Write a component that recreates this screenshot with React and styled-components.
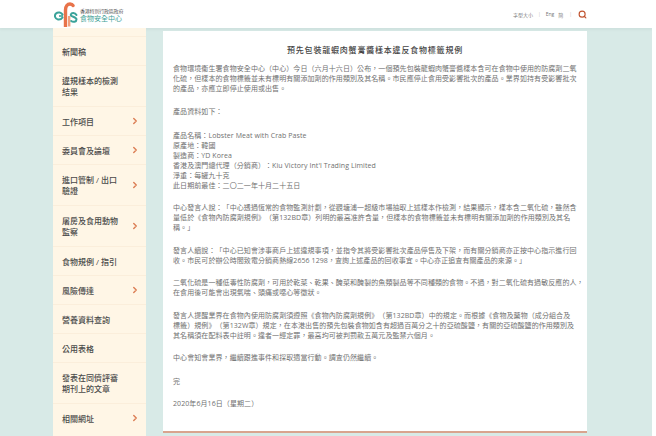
import React from "react";
import styled, { createGlobalStyle } from "styled-components";
import { ChevronRight, Search } from "lucide-react";

const GlobalStyle = createGlobalStyle`
  html, body {
    margin: 0;
    padding: 0;
    height: 436px;
    overflow: hidden;
    background: #fff;
    font-family: "Open Sans", "Noto Sans CJK TC", sans-serif;
  }
`;

const Page = styled.div`
  width: 652px;
  height: 436px;
  overflow: hidden;
  background: #d8eae7;
`;

const Header = styled.header`
  height: 28px;
  background: #fff;
  display: flex;
  align-items: center;
  justify-content: space-between;
  padding: 0 65px 0 54px;
  box-shadow: 0 2px 2px rgba(60, 110, 105, 0.06);
`;

const Brand = styled.div`
  display: flex;
  align-items: center;
  gap: 2px;
`;

const BrandText = styled.div`
  display: flex;
  flex-direction: column;
  gap: 1px;
  padding-top: 3px;
`;

const GovName = styled.span`
  font-size: 5px;
  letter-spacing: -0.2px;
  line-height: 6px;
  color: #555;
  white-space: nowrap;
`;

const CentreName = styled.span`
  font-size: 7px;
  line-height: 8px;
  color: #3f9f97;
  white-space: nowrap;
`;

const Tools = styled.div`
  display: flex;
  align-items: center;
  gap: 4px;
  font-size: 5px;
  color: #777;
`;

const ToolDivider = styled.span`
  color: #c4c4c4;
  margin: 0 ${(p) => p.$space ?? 1}px;
`;

const Columns = styled.div`
  display: flex;
  align-items: flex-start;
  gap: 17px;
  padding-left: 53px;
`;

const Sidebar = styled.nav`
  width: 93px;
  height: 408px;
  padding-top: 8px;
  box-sizing: border-box;
  background: #fff6e6;
  flex-shrink: 0;
`;

const NavRow = styled.div`
  display: flex;
  align-items: center;
  justify-content: space-between;
  height: ${(p) => (p.$tall ? 41 : 29)}px;
  box-sizing: border-box;
  padding: 0 6px 0 9px;
  border-top: 1px solid #fbeedb;
  font-size: 8px;
  line-height: 11px;
  font-weight: 500;
  color: #4a4a4a;
`;

const NavLabel = styled.span`
  width: 60px;
`;

const Arrow = styled(ChevronRight)`
  width: 10px;
  height: 10px;
  color: #dc7f56;
  stroke-width: 3.4;
  flex-shrink: 0;
`;

const Article = styled.main`
  width: 424px;
  height: 402px;
  margin-top: 3px;
  box-sizing: border-box;
  padding: 13px 10px 0;
  background: #fff;
  border-bottom: 2px solid #d9a48e;
  font-size: 7px;
  letter-spacing: 0.08px;
  line-height: 10px;
  color: #707070;
  text-spacing-trim: space-all;
`;

const Title = styled.h1`
  margin: 0 0 9px;
  text-align: center;
  font-size: 8px;
  letter-spacing: 0.8px;
  line-height: 11px;
  font-weight: 500;
  color: #444;
`;

const Para = styled.p`
  margin: 0 0 ${(p) => p.$gap ?? 12.5}px;
`;

const Line = styled.span`
  display: block;
  white-space: ${(p) => (p.$nowrap ? "nowrap" : "normal")};
`;

// the copy is typed with plain marks, the page shows them full width
const fullWidth = (text) =>
  text
    .replace(/,/g, "\uFF0C")
    .replace(/\(/g, "\uFF08")
    .replace(/\)/g, "\uFF09")
    .replace(/:/g, "\uFF1A");

const navItems = [
  { label: "新聞稿" },
  { label: "違規樣本的檢測結果", tall: true },
  { label: "工作項目", arrow: true },
  { label: "委員會及論壇", arrow: true },
  { label: "進口管制 / 出口驗證", tall: true, arrow: true },
  { label: "屠房及食用動物監察", tall: true, arrow: true },
  { label: "食物規例 / 指引" },
  { label: "風險傳達", arrow: true },
  { label: "營養資料查詢" },
  { label: "公用表格" },
  { label: "發表在同儕評審期刊上的文章", tall: true },
  { label: "相關網址", arrow: true },
];

const paragraphs = [
  { lines: ["食物環境衞生署食物安全中心(中心)今日(六月十六日)公布,一個預先包裝龍蝦肉蟹膏醬樣本含可在食物中使用的防腐劑二氧化硫,但樣本的食物標籤並未有標明有關添加劑的作用類別及其名稱。市民應停止食用受影響批次的產品。業界如持有受影響批次的產品,亦應立即停止使用或出售。"] },
  { lines: ["產品資料如下:"], gap: 14 },
  {
    lines: [
      "產品名稱:Lobster Meat with Crab Paste",
      "原產地:韓國",
      "製造商:YD Korea",
      "香港及澳門總代理(分銷商):Kiu Victory Int'l Trading Limited",
      "淨重:每罐九十克",
      "此日期前最佳:二〇二一年十月二十五日",
    ],
  },
  { lines: ["中心發言人說:「中心透過恆常的食物監測計劃,從觀塘浦一超級市場抽取上述樣本作檢測,結果顯示,樣本含二氧化硫,雖然含量低於《食物內防腐劑規例》(第132BD章)列明的最高准許含量,但樣本的食物標籤並未有標明有關添加劑的作用類別及其名稱。」"] },
  { lines: ["發言人續說:「中心已知會涉事商戶上述違規事項,並指令其將受影響批次產品停售及下架,而有關分銷商亦正按中心指示進行回收。市民可於辦公時間致電分銷商熱線2656 1298,查詢上述產品的回收事宜。中心亦正追查有關產品的來源。」"] },
  {
    // the comma hangs past the text edge in the original, so this break is fixed
    nowrap: true,
    lines: [
      "二氧化硫是一種低毒性防腐劑,可用於乾菜、乾果、醃菜和醃製的魚類製品等不同種類的食物。不過,對二氧化硫有過敏反應的人,",
      "在食用後可能會出現氣喘、頭痛或噁心等徵狀。",
    ],
  },
  { lines: ["發言人提醒業界在食物內使用防腐劑須遵照《食物內防腐劑規例》(第132BD章)中的規定。而根據《食物及藥物(成分組合及標籤)規例》(第132W章)規定,在本港出售的預先包裝食物如含有超過百萬分之十的亞硫酸鹽,有關的亞硫酸鹽的作用類別及其名稱須在配料表中註明。違者一經定罪,最高均可被判罰款五萬元及監禁六個月。"] },
  { lines: ["中心會知會業界,繼續跟進事件和採取適當行動。調查仍然繼續。"], gap: 14 },
  { lines: ["完"], gap: 12 },
  { lines: ["2020年6月16日(星期二)"] },
];

const Logo = () => (
  <svg width="24" height="25" viewBox="0 0 24 25" fill="none">
    <path d="M11.5 24.5V8C11.5 4 13.5 2 16 2C17.5 2 18.5 2.6 19 3.6" stroke="#e8734a" strokeWidth="3.4" strokeLinecap="round" />
    <path d="M15.2 24.5V14" stroke="#f0a07e" strokeWidth="2.4" />
    <path d="M8.5 12.5C7.5 10.5 4 9.5 2 11.5C0 13.5 1 17 4 17.5C6 17.8 7.5 17 8.5 15.5" stroke="#3aa39a" strokeWidth="2" strokeLinecap="round" />
    <path d="M5 14H9" stroke="#3aa39a" strokeWidth="1.6" />
    <path d="M22.5 13C21 10.5 17.5 10.5 16.8 12.5C16 15 22.5 14.5 22.5 17.5C22.5 20 19 20.5 17.2 19" stroke="#3aa39a" strokeWidth="2" strokeLinecap="round" />
  </svg>
);

const App = () => (
  <>
    <GlobalStyle />
    <Page>
      <Header>
        <Brand>
          <Logo />
          <BrandText>
            <GovName>香港特別行政區政府</GovName>
            <CentreName>食物安全中心</CentreName>
          </BrandText>
        </Brand>
        <Tools>
          <span>字型大小</span>
          <ToolDivider>|</ToolDivider>
          <span>Eng</span>
          <span>简</span>
          <ToolDivider $space={2}>|</ToolDivider>
          <Search size={9} color="#c0532f" strokeWidth={3} />
        </Tools>
      </Header>
      <Columns>
        <Sidebar>
          {navItems.map((item) => (
            <NavRow key={item.label} $tall={item.tall}>
              <NavLabel>{item.label}</NavLabel>
              {item.arrow && <Arrow />}
            </NavRow>
          ))}
        </Sidebar>
        <Article>
          <Title>預先包裝龍蝦肉蟹膏醬樣本違反食物標籤規例</Title>
          {paragraphs.map((para) => (
            <Para key={para.lines[0]} $gap={para.gap}>
              {para.lines.map((line) => (
                <Line key={line} $nowrap={para.nowrap}>
                  {fullWidth(line)}
                </Line>
              ))}
            </Para>
          ))}
        </Article>
      </Columns>
    </Page>
  </>
);

export default App;
